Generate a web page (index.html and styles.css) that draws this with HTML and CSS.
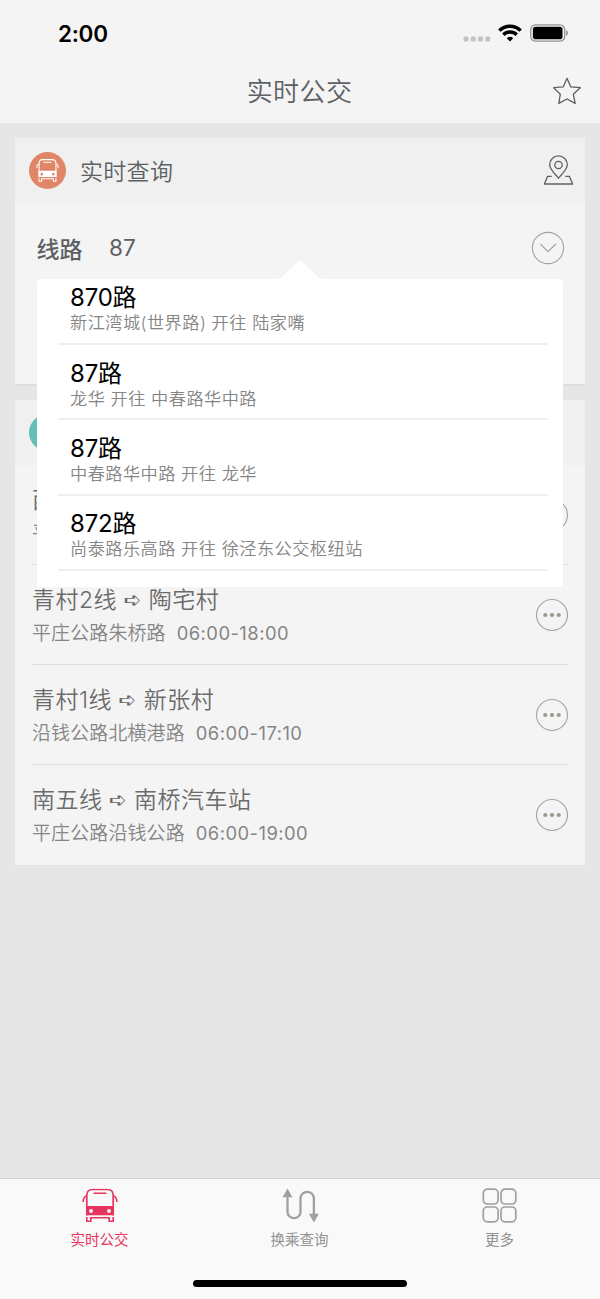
FILE: index.html
```html
<!DOCTYPE html>
<html lang="zh-CN">
<head>
<meta charset="utf-8">
<title>实时公交</title>
<link rel="stylesheet" href="styles.css">
</head>
<body>
<svg class="defs" width="0" height="0">
  <symbol id="bus" viewBox="0 0 36 34">
    <path d="M4.8 27V6.8Q4.8 1 10.5 1h15Q31.2 1 31.2 6.8V27" fill="none" stroke="currentColor" stroke-width="1.7"/>
    <path d="M11.5 4.8h13M4.6 7.5Q1.2 8 1.2 13.5M31.4 7.5Q34.8 8 34.8 13.5" fill="none" stroke="currentColor" stroke-width="1.6"/>
    <path fill="currentColor" fill-rule="evenodd" d="M4 17.5h28v9.2H4zM9 20.4a2 2 0 1 0 0 4a2 2 0 1 0 0-4zM27 20.4a2 2 0 1 0 0 4a2 2 0 1 0 0-4z"/>
    <path d="M4.8 28.4v4.4h4v-3.6h18.4v3.6h4v-4.4" fill="none" stroke="currentColor" stroke-width="1.6"/>
  </symbol>
</svg>
<div class="screen">
  <div class="status">
    <span class="clock">2:00</span>
    <div class="signals">
      <svg class="dots" width="28" height="6" viewBox="0 0 28 6" fill="#c3c3c3"><rect x="0.5" y=".5" width="5" height="5" rx="1.5"/><rect x="7.8" y=".5" width="5" height="5" rx="1.5"/><rect x="15" y=".5" width="5" height="5" rx="1.5"/><rect x="22.3" y=".5" width="5" height="5" rx="1.5"/></svg>
      <svg class="wifi" width="24" height="18" viewBox="0 0 24 18" fill="none" stroke="#000" stroke-width="3.4"><path d="M1.3 6.6a15.2 15.2 0 0 1 21.4 0"/><path d="M5.3 10.7a9.5 9.5 0 0 1 13.4 0"/><path d="M12 17.4L8.8 14.2a4.5 4.5 0 0 1 6.4 0z" fill="#000" stroke="none"/></svg>
      <svg width="39" height="18" viewBox="0 0 39 18"><rect x=".8" y=".8" width="33.9" height="16.4" rx="4.8" fill="none" stroke="#949494" stroke-width="1.3"/><rect x="2.9" y="2.8" width="29.6" height="12.4" rx="2.8"/><path d="M36.2 6v6q1.8-.9 1.8-3t-1.8-3z" fill="#949494"/></svg>
    </div>
  </div>
  <header class="nav">
    <h1>实时公交</h1>
    <svg class="star" width="30" height="28" viewBox="0 0 30 28" fill="none" stroke="#5d6063" stroke-width="1.3" stroke-linejoin="round"><path d="M15 1.3L18.7 9.8L28.3 10.7L21.3 17.2L23.2 26.4L15 22L6.8 26.4L8.3 17.2L1.7 10.7L11.3 9.8z"/></svg>
  </header>
  <main class="content">
    <section class="card query">
      <div class="card-head">
        <span class="badge orange"><svg width="23" height="23" viewBox="0 0 36 34" preserveAspectRatio="none"><use href="#bus" width="36" height="34"/></svg></span>
        <h2>实时查询</h2>
        <svg class="pin" width="32" height="30" viewBox="0 0 32 30" fill="none" stroke="#5d6063" stroke-width="1.3" stroke-linejoin="round"><path d="M15.5 23.2C12 18.8 6.7 14.4 6.7 9.7a8.8 8.8 0 0 1 17.6 0C24.3 14.4 19 18.8 15.5 23.2z"/><circle cx="15.5" cy="10" r="3.7"/><path d="M8.7 21.3H4.6L1.4 29h28.2l-3.2-7.7h-4.1"/></svg>
      </div>
      <div class="route-input">
        <b>线路</b><span class="value">87</span>
        <svg width="34" height="34" viewBox="0 0 34 34" fill="none" stroke="#a3a39d" stroke-width="1.1"><circle cx="17" cy="17" r="15.6"/><path d="M9.5 13l7.5 7.7 7.9-7.7"/></svg>
      </div>
      <div class="popover">
        <svg class="tip" width="46" height="20" viewBox="0 0 46 20"><path d="M0 19Q3 18.5 5.5 16.5L20.5 2Q23 0 25.5 2L40.5 16.5Q43 18.5 46 19v1H0z" fill="#fff"/></svg>
        <div class="option"><p class="num">870路</p><p class="dir">新江湾城(世界路) 开往 陆家嘴</p></div>
        <div class="option"><p class="num">87路</p><p class="dir">龙华 开往 中春路华中路</p></div>
        <div class="option"><p class="num">87路</p><p class="dir">中春路华中路 开往 龙华</p></div>
        <div class="option"><p class="num">872路</p><p class="dir">尚泰路乐高路 开往 徐泾东公交枢纽站</p></div>
      </div>
    </section>
    <section class="card history">
      <div class="card-head">
        <span class="badge teal"><svg width="24" height="24" fill="none" stroke="#f0f0f0" stroke-width="1.4"><circle cx="12.5" cy="12" r="10.5"/><path d="M12 5v7h5"/></svg></span>
      </div>
      <div class="row"><div><p class="line">西</p><p class="stop">平</p></div><svg class="more" width="34" height="34" viewBox="0 0 34 34"><use href="#dots3"/></svg></div>
      <div class="row"><div><p class="line">青村2线<i>➪</i>陶宅村</p><p class="stop">平庄公路朱桥路<time>06:00-18:00</time></p></div><svg class="more" width="34" height="34" viewBox="0 0 34 34"><use href="#dots3"/></svg></div>
      <div class="row"><div><p class="line">青村1线<i>➪</i>新张村</p><p class="stop">沿钱公路北横港路<time>06:00-17:10</time></p></div><svg class="more" width="34" height="34" viewBox="0 0 34 34"><use href="#dots3"/></svg></div>
      <div class="row"><div><p class="line">南五线<i>➪</i>南桥汽车站</p><p class="stop">平庄公路沿钱公路<time>06:00-19:00</time></p></div><svg class="more" width="34" height="34" viewBox="0 0 34 34"><use href="#dots3"/></svg></div>
    </section>
  </main>
  <footer class="tabs">
    <nav>
      <a class="active"><svg width="36" height="35" viewBox="0 0 36 34"><use href="#bus"/></svg><span>实时公交</span></a>
      <a><svg width="40" height="35" viewBox="0 0 40 35" fill="none" stroke="#a0a0a0" stroke-width="2.3"><path d="M7.5 8v15.7a6.5 6.5 0 0 0 13 0V10.5a6.7 6.7 0 0 1 13.4 0V27"/><path d="M7.5 .5l5 8.8h-10zM33.9 34.5l5-8.8h-10z" fill="#a0a0a0" stroke="none"/></svg><span>换乘查询</span></a>
      <a><svg width="36" height="35" viewBox="0 0 36 35" fill="none" stroke="#a0a0a0" stroke-width="1.7"><rect x="1.3" y="1.2" width="14.8" height="14.8" rx="4"/><rect x="19" y="1.2" width="14.8" height="14.8" rx="4"/><rect x="1.3" y="19" width="14.8" height="14.8" rx="4"/><rect x="19" y="19" width="14.8" height="14.8" rx="4"/></svg><span>更多</span></a>
    </nav>
    <div class="home"></div>
  </footer>
</div>
<svg class="defs" width="0" height="0">
  <symbol id="dots3" viewBox="0 0 34 34">
    <circle cx="17" cy="17" r="15.5" fill="none" stroke="#a3a39d" stroke-width="1.1"/>
    <g fill="#999991"><circle cx="10.3" cy="17" r="2.1"/><circle cx="17" cy="17" r="2.1"/><circle cx="23.7" cy="17" r="2.1"/></g>
  </symbol>
</svg>
</body>
</html>
```
FILE: styles.css
```css
* { box-sizing: border-box; }
body, h1, h2, p { margin: 0; font-weight: 350; }
body {
  background: #e6e6e6;
  font-family: Inter, "Noto Sans CJK SC", sans-serif;
  color: #5d6063;
}
svg { display: block; flex: none; }
.defs { position: absolute; }
.screen { width: 600px; height: 1299px; display: flex; flex-direction: column; overflow: hidden; }

.status { height: 66px; flex: none; background: #f4f4f4; display: flex; justify-content: space-between; padding: 0 32px 0 58px; }
.clock { font-size: 22.5px; font-weight: 600; line-height: 67px; color: #000; letter-spacing: -.3px; }
.signals { display: flex; align-items: center; }
.dots { margin: 12px 7px 0 0; }
.wifi { margin-right: 8px; }
.signals svg:last-child { margin-right: -1px; }
.nav { height: 58px; flex: none; background: #f4f4f4; border-bottom: 1px solid #e9e9e9; display: grid; grid-template-columns: 60px 1fr 60px; align-items: center; }
.nav h1 { grid-column: 2; text-align: center; font-size: 26px; line-height: 40px; margin: -5px 0 0 -1px; letter-spacing: .4px; }
.star { margin: -7px 0 0 12px; }

.content { flex: 1; padding: 14px 15px 0; display: flex; flex-direction: column; gap: 14px; }
.card { background: #f4f4f4; }
.card-head { height: 65px; background: #f0f0f0; display: flex; align-items: center; padding: 0 10px 0 14px; }
.card-head h2 { font-size: 23px; letter-spacing: .3px; margin: -1px 0 0 14px; flex: 1; }
.pin { margin-top: -2px; }
.badge { width: 37px; height: 37px; border-radius: 50%; display: flex; align-items: center; justify-content: center; color: #fff; }
.orange { background: #e08567; }
.teal { background: #62bfb3; }
.query { position: relative; height: 248px; border-bottom: 2px solid #dcdcdc; }
.route-input { height: 90px; display: flex; align-items: center; padding: 0 20.5px 0 21.5px; font-size: 23px; }
.route-input b { font-weight: 500; margin-top: -1px; }
.value { margin: -1px 0 0 26.5px; flex: 1; font-weight: 400; font-size: 22.5px; }

.popover { position: absolute; left: 21.5px; right: 22px; top: 140.5px; height: 308.5px; background: #fff; border-radius: 2px; padding: 0 15px 0 21.5px; z-index: 2; }
.tip { position: absolute; left: 240.5px; top: -19px; }
.option { height: 75.4px; border-bottom: 2px solid #efefef; padding: 14.7px 0 0 12px; }
.option:nth-child(2) { height: 66.4px; padding-top: 5.7px; }
.num { font-size: 24px; line-height: 27px; font-weight: 400; color: #000; letter-spacing: -.2px; }
.dir { font-size: 17.2px; line-height: 23px; color: #858585; letter-spacing: .45px; white-space: nowrap; }

.row { height: 100px; margin: 0 17px; border-bottom: 1.5px solid #dedede; display: flex; justify-content: space-between; padding-top: 18px; }
.row:last-child { border: 0; }
.line { font-size: 23px; line-height: 34px; color: #6b6b6b; letter-spacing: .5px; }
.line i { font: 21px/20px "DejaVu Sans", sans-serif; margin: 0 7px 0 6.5px; position: relative; top: -1px; }
.stop { font-size: 19px; line-height: 33px; color: #858585; letter-spacing: .1px; }
.stop time { margin-left: 11px; font-size: 18.4px; font-weight: 400; letter-spacing: .45px; }
.more { margin: 15px -1px 0 0; }

.tabs { height: 121px; flex: none; background: #f9f9f9; border-top: 1px solid #cfcfcf; }
.tabs nav { display: grid; grid-template-columns: repeat(3, 1fr); height: 101px; padding-top: 9px; }
.tabs a { display: flex; flex-direction: column; align-items: center; color: #929292; }
.tabs span { font-size: 14.5px; line-height: 22px; margin: 6px 1px 0 0; font-weight: 400; }
.tabs .active { color: #e8335f; }
.home { width: 214px; height: 7px; border-radius: 4px; background: #000; margin: 0 auto; }
```
